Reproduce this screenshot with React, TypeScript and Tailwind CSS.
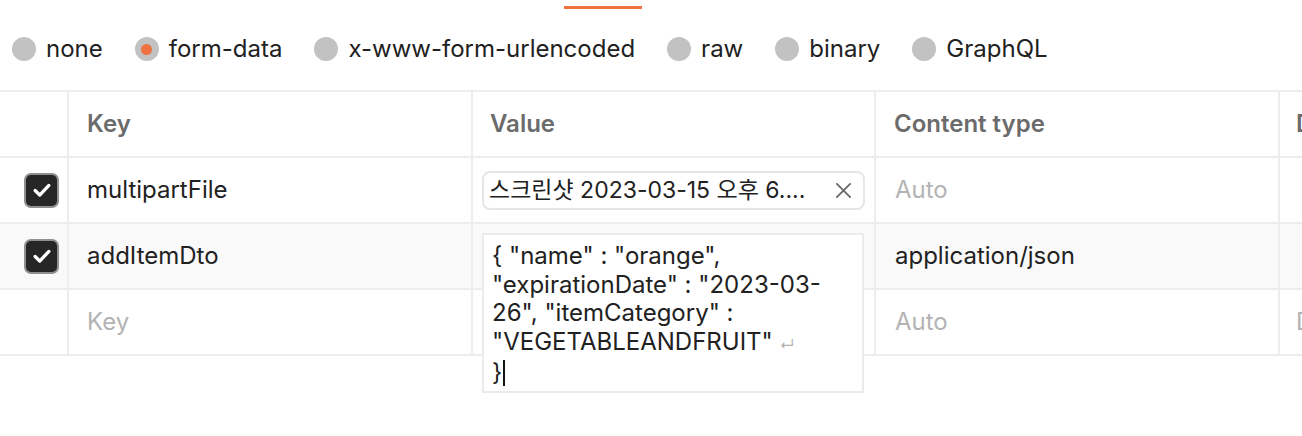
import React from 'react';

const font = { fontFamily: 'Inter, "Noto Sans CJK KR", sans-serif' };

const bodyTypes = ['none', 'form-data', 'x-www-form-urlencoded', 'raw', 'binary', 'GraphQL'];

function Radio({ label, selected }: { label: string; selected?: boolean }) {
  return (
    <div className="flex items-center gap-[10px]">
      <span className="flex h-[24px] w-[24px] items-center justify-center rounded-full bg-[#c2c2c2]">
        {selected && <span className="h-[11px] w-[11px] rounded-full bg-[#ef7241]" />}
      </span>
      <span className="text-[24px] leading-none text-[#212121]">{label}</span>
    </div>
  );
}

function Checkbox() {
  return (
    <span className="flex h-[35px] w-[35px] items-center justify-center rounded-[7px] border-2 border-[#8f8f8f] bg-[#262626]">
      <svg width="22" height="22" viewBox="0 0 24 24" fill="none">
        <path d="M4.5 12.5l5 5L19.5 7" stroke="white" strokeWidth="3.6" strokeLinecap="round" strokeLinejoin="round" />
      </svg>
    </span>
  );
}

function Row({
  checked,
  keyText,
  placeholder,
  value,
  contentType,
  ctPlaceholder,
  hover,
  descPlaceholder,
}: {
  checked?: boolean;
  keyText: string;
  placeholder?: boolean;
  value?: React.ReactNode;
  contentType: string;
  ctPlaceholder?: boolean;
  hover?: boolean;
  descPlaceholder?: boolean;
}) {
  return (
    <div className={`flex h-[66px] border-b-2 border-[#ededed] ${hover ? 'bg-[#f9f9f9]' : 'bg-white'}`}>
      <div className="flex w-[69px] shrink-0 items-center border-r-2 border-[#ededed] pl-[24px]">
        {checked && <Checkbox />}
      </div>
      <div className="flex w-[404px] shrink-0 items-center border-r-2 border-[#ededed] pl-[18px]">
        <span className={`text-[24px] ${placeholder ? 'text-[#b3b3b3]' : 'text-[#212121]'}`}>{keyText}</span>
      </div>
      <div className="relative flex w-[403px] shrink-0 items-center border-r-2 border-[#ededed] px-[9px]">
        {value}
      </div>
      <div className="flex w-[404px] shrink-0 items-center border-r-2 border-[#ededed] pl-[19px]">
        <span className={`text-[24px] ${ctPlaceholder ? 'text-[#b3b3b3]' : 'text-[#212121]'}`}>{contentType}</span>
      </div>
      <div className="flex flex-1 items-center pl-[16px]">
        {descPlaceholder && <span className="text-[24px] text-[#b3b3b3]">Description</span>}
      </div>
    </div>
  );
}

export default function App() {
  return (
    <div className="h-[436px] w-[1302px] overflow-hidden bg-white" style={font}>
      {/* tab underline */}
      <div className="flex h-[12px] pl-[564px] pt-[6px]">
        <div className="h-[3px] w-[78px] bg-[#ef7241]" />
      </div>

      {/* body type radios */}
      <div className="flex h-[74px] items-center gap-[32px] pl-[12px]">
        {bodyTypes.map((t) => (
          <Radio key={t} label={t} selected={t === 'form-data'} />
        ))}
      </div>

      {/* table */}
      <div className="mt-[4px] w-[1500px] border-t-2 border-[#ededed]">
        <div className="flex h-[66px] border-b-2 border-[#ededed]">
          <div className="w-[69px] shrink-0 border-r-2 border-[#ededed]" />
          <div className="flex w-[404px] shrink-0 items-center border-r-2 border-[#ededed] pl-[18px]">
            <span className="text-[24px] font-semibold text-[#6b6b6b]">Key</span>
          </div>
          <div className="flex w-[403px] shrink-0 items-center border-r-2 border-[#ededed] pl-[17px]">
            <span className="text-[24px] font-semibold text-[#6b6b6b]">Value</span>
          </div>
          <div className="flex w-[404px] shrink-0 items-center border-r-2 border-[#ededed] pl-[18px]">
            <span className="text-[24px] font-semibold text-[#6b6b6b]">Content type</span>
          </div>
          <div className="flex flex-1 items-center pl-[16px]">
            <span className="text-[24px] font-semibold text-[#6b6b6b]">Description</span>
          </div>
        </div>

        <Row
          checked
          keyText="multipartFile"
          contentType="Auto"
          ctPlaceholder
          value={
            <div className="flex h-[39px] w-full items-center justify-between rounded-[8px] border-2 border-[#e6e6e6] pl-[5px] pr-[11px]">
              <span className="text-[23px] text-[#212121]">스크린샷 2023-03-15 오후 6....</span>
              <svg width="17" height="17" viewBox="0 0 18 18" fill="none">
                <path d="M2 2l14 14M16 2L2 16" stroke="#6b6b6b" strokeWidth="2" strokeLinecap="round" />
              </svg>
            </div>
          }
        />

        <Row
          checked
          hover
          keyText="addItemDto"
          contentType="application/json"
          value={
            <div className="absolute left-[9px] right-[10px] top-[9px] z-10 h-[160px] border-2 border-[#ebebeb] bg-white px-[8px] pt-[7px] text-[24px] leading-[28.5px] text-[#212121]">
              <div>{'{ "name" : "orange",'}</div>
              <div>{'"expirationDate" : "2023-03-'}</div>
              <div>{'26", "itemCategory" :'}</div>
              <div>
                {'"VEGETABLEANDFRUIT" '}
                <span className="text-[15px] text-[#b3b3b3]">↵</span>
              </div>
              <div className="flex items-center">
                <span>{'}'}</span>
                <span className="ml-[1px] h-[26px] w-[2px] bg-[#111]" />
              </div>
            </div>
          }
        />

        <Row keyText="Key" placeholder contentType="Auto" ctPlaceholder descPlaceholder />
      </div>
    </div>
  );
}
